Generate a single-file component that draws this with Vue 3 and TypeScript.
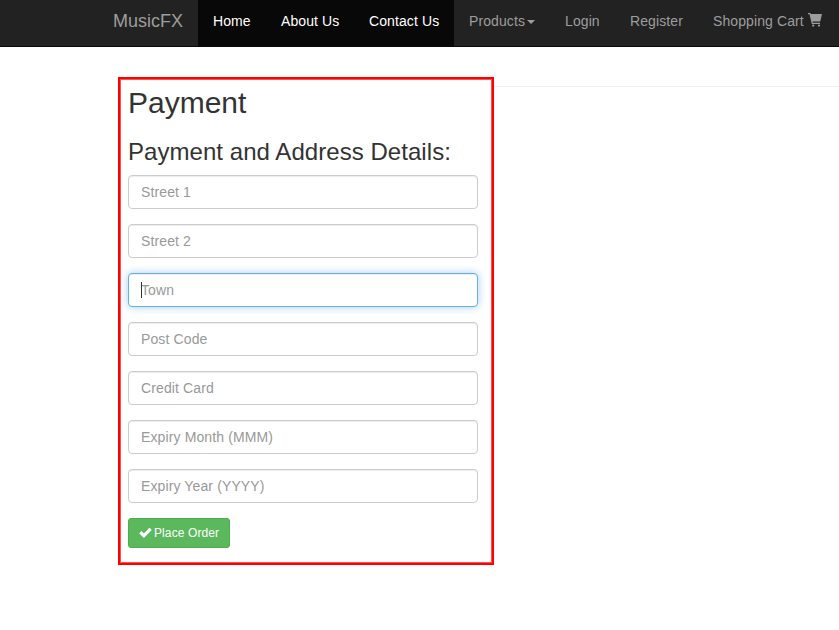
<script setup lang="ts">
interface NavItem {
  label: string
  active?: boolean
  caret?: boolean
  cart?: boolean
}

interface Field {
  name: string
  label: string
  focused?: boolean
}

const navItems: NavItem[] = [
  { label: 'Home', active: true },
  { label: 'About Us', active: true },
  { label: 'Contact Us', active: true },
  { label: 'Products', caret: true },
  { label: 'Login' },
  { label: 'Register' },
  { label: 'Shopping Cart', cart: true },
]

const fields: Field[] = [
  { name: 'street1', label: 'Street 1' },
  { name: 'street2', label: 'Street 2' },
  { name: 'town', label: 'Town', focused: true },
  { name: 'postcode', label: 'Post Code' },
  { name: 'card', label: 'Credit Card' },
  { name: 'month', label: 'Expiry Month (MMM)' },
  { name: 'year', label: 'Expiry Year (YYYY)' },
]
</script>

<template>
  <div class="page">
    <nav class="navbar">
      <a class="brand">MusicFX</a>
      <a v-for="item in navItems" :key="item.label" class="nav-link" :class="{ active: item.active }">
        <span>{{ item.label }}</span>
        <i v-if="item.caret" class="caret"></i>
        <svg v-if="item.cart" class="cart" viewBox="0 0 14 14" width="14" height="14">
          <path d="M2 1H14L12.2 8.4H3.6Z" />
          <path class="frame" d="M0 0.7H2L4.3 10.4H12" />
          <circle cx="5.2" cy="12.6" r="1.1" />
          <circle cx="11" cy="12.6" r="1.1" />
        </svg>
      </a>
    </nav>
    <main class="content">
      <section class="panel">
        <h2>Payment</h2>
        <h3>Payment and Address Details:</h3>
        <form @submit.prevent>
          <div v-for="field in fields" :key="field.name" class="field">
            <input
              type="text"
              :name="field.name"
              :placeholder="field.label"
              :class="{ focused: field.focused }"
            />
            <i v-if="field.focused" class="text-cursor"></i>
          </div>
          <button type="submit">
            <svg viewBox="0 0 13 12" width="13" height="12">
              <path d="M0.2 6.4L2.4 4.1L4.9 6.4L10.4 0.8L12.8 3.1L4.9 11Z" />
            </svg>
            <span>Place Order</span>
          </button>
        </form>
      </section>
      <div class="rule"></div>
    </main>
  </div>
</template>

<style>
body {
  margin: 0;
  background: #fff;
  overflow: hidden;
}
</style>

<style scoped>
.page {
  height: 630px;
  font-family: "Liberation Sans", Arial, sans-serif;
  font-size: 14px;
  line-height: 20px;
  color: #333;
}
.page * {
  box-sizing: border-box;
}
.navbar {
  display: flex;
  height: 47px;
  padding-left: 98px;
  background: #222;
  border-bottom: 1px solid #080808;
  color: #9d9d9d;
  white-space: nowrap;
}
.brand {
  flex: none;
  width: 100px;
  padding: 11px 15px 15px;
  font-size: 18px;
}
.nav-link {
  display: flex;
  flex: none;
  padding: 11px 0 15px 15px;
  letter-spacing: 0.1px;
}
.nav-link:nth-child(2) { width: 68px; }
.nav-link:nth-child(3) { width: 88px; }
.nav-link:nth-child(4) { width: 100px; }
.nav-link:nth-child(5) { width: 96px; }
.nav-link:nth-child(6) { width: 65px; }
.nav-link:nth-child(7) { width: 83px; }
.nav-link.active {
  background: #080808;
  color: #fff;
}
.caret {
  width: 8px;
  height: 4px;
  margin: 9px 0 0 2px;
  background: currentColor;
  clip-path: polygon(0 0, 100% 0, 50% 100%);
}
.cart {
  margin: 2px 0 0 4px;
  fill: currentColor;
}
.frame {
  fill: none;
  stroke: currentColor;
  stroke-width: 1.2;
}
.content {
  display: flex;
  padding: 30px 0 0 118px;
}
.panel {
  width: 376px;
  height: 488px;
  padding: 7px 14px 0 8px;
  border: 2px solid #f00;
  box-shadow: inset 0 0 0 1px #ff5050;
}
h2,
h3 {
  margin: 0;
  font-weight: 400;
}
h2 {
  font-size: 30px;
  line-height: 33px;
}
h3 {
  margin: 20px 0 10px;
  font-size: 24px;
  line-height: 26px;
  letter-spacing: 0.05px;
}
.field {
  position: relative;
  height: 34px;
  margin-bottom: 15px;
}
input {
  display: block;
  width: 350px;
  height: 34px;
  padding: 6px 12px;
  border: 1px solid #ccc;
  border-radius: 4px;
  outline: none;
  background: #fff;
  color: #555;
  font: 14px/20px "Liberation Sans", Arial, sans-serif;
  letter-spacing: 0.12px;
  box-shadow: inset 0 1px 1px rgba(0, 0, 0, 0.075);
}
input::placeholder {
  color: #999;
  opacity: 1;
}
input.focused {
  border-color: #66afe9;
  box-shadow: inset 0 1px 1px rgba(0, 0, 0, 0.075), 0 0 8px rgba(102, 175, 233, 0.6);
}
.text-cursor {
  position: absolute;
  left: 13px;
  top: 9px;
  width: 1px;
  height: 16px;
  background: #333;
}
button {
  display: flex;
  align-items: center;
  width: 102px;
  height: 30px;
  padding: 0 10px;
  border: 1px solid #4cae4c;
  border-radius: 3px;
  background: #5cb85c;
  color: #fff;
  font: 12px/18px "Liberation Sans", Arial, sans-serif;
  letter-spacing: 0.1px;
  white-space: nowrap;
}
button svg {
  flex: none;
  margin-right: 2px;
  fill: currentColor;
}
.rule {
  flex: 1;
  height: 1px;
  margin-top: 9px;
  background: #eee;
}
</style>
